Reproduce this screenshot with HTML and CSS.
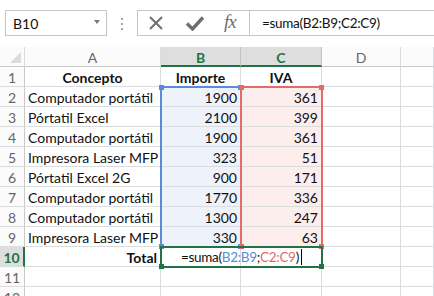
FILE: index.html
```html
<!DOCTYPE html>
<html>
	<head>
		<meta http-equiv="Content-Type" content="text/html; charset=utf-8">
		<title>suma</title>
		<link rel="stylesheet" href="styles.css">
	</head>
	<body>
		<div class="topbar">
			<div class="namebox">
				<span>B10</span>
				<span class="caret"></span>
			</div>
			<div class="grip"><i></i><i></i><i></i></div>
			<div class="fbar">
				<div class="fbtns">
					<svg class="ico-x" width="16" height="16" viewBox="0 0 16 16">
						<path d="M2 2 L14 14 M14 2 L2 14" stroke="#6f6f6f" stroke-width="2" fill="none"/>
					</svg>
					<svg class="ico-ok" width="20" height="16" viewBox="0 0 20 16">
						<path d="M2 8.5 L7.5 14 L18 2.5" stroke="#6f6f6f" stroke-width="3.4" fill="none"/>
					</svg>
					<span class="fx">fx</span>
				</div>
				<div class="finput">=suma(B2:B9;C2:C9)</div>
			</div>
		</div>

		<div class="sheet">
			<!-- headers -->
			<div class="c hd corner"><span class="tri"></span></div>
			<div class="c hd">A</div>
			<div class="c hd sel">B</div>
			<div class="c hd sel">C</div>
			<div class="c hd">D</div>
			<div class="c hd"></div>

			<div class="c rh">1</div>
			<div class="c b ctr">Concepto</div>
			<div class="c b ctr">Importe</div>
			<div class="c b ctr">IVA</div>
			<div class="c"></div><div class="c"></div>

			<div class="c rh">2</div>
			<div class="c">Computador portátil</div>
			<div class="c num blu">1900</div>
			<div class="c num red">361</div>
			<div class="c"></div><div class="c"></div>

			<div class="c rh">3</div>
			<div class="c">Pórtatil Excel</div>
			<div class="c num blu">2100</div>
			<div class="c num red">399</div>
			<div class="c"></div><div class="c"></div>

			<div class="c rh">4</div>
			<div class="c">Computador portátil</div>
			<div class="c num blu">1900</div>
			<div class="c num red">361</div>
			<div class="c"></div><div class="c"></div>

			<div class="c rh">5</div>
			<div class="c">Impresora Laser MFP</div>
			<div class="c num blu">323</div>
			<div class="c num red">51</div>
			<div class="c"></div><div class="c"></div>

			<div class="c rh">6</div>
			<div class="c">Pórtatil Excel 2G</div>
			<div class="c num blu">900</div>
			<div class="c num red">171</div>
			<div class="c"></div><div class="c"></div>

			<div class="c rh">7</div>
			<div class="c">Computador portátil</div>
			<div class="c num blu">1770</div>
			<div class="c num red">336</div>
			<div class="c"></div><div class="c"></div>

			<div class="c rh">8</div>
			<div class="c">Computador portátil</div>
			<div class="c num blu">1300</div>
			<div class="c num red">247</div>
			<div class="c"></div><div class="c"></div>

			<div class="c rh">9</div>
			<div class="c">Impresora Laser MFP</div>
			<div class="c num blu">330</div>
			<div class="c num red">63</div>
			<div class="c"></div><div class="c"></div>

			<div class="c rh rsel">10</div>
			<div class="c b num">Total</div>
			<div class="c edit">=suma(<span class="rb">B2:B9</span>;<span class="rr">C2:C9</span>)<span class="cursor"></span></div>
			<div class="c"></div>
			<div class="c"></div><div class="c"></div>

			<div class="c rh">11</div>
			<div class="c"></div><div class="c"></div><div class="c"></div><div class="c"></div><div class="c"></div>

			<div class="c rh">12</div>
			<div class="c"></div><div class="c"></div><div class="c"></div><div class="c"></div><div class="c"></div>

			<!-- range outlines drawn over the grid -->
			<div class="range rng-b">
				<span class="knob tl"></span><span class="knob tr"></span>
				<span class="knob bl"></span><span class="knob br"></span>
			</div>
			<div class="range rng-r">
				<span class="knob tl"></span><span class="knob tr"></span>
				<span class="knob bl"></span><span class="knob br"></span>
			</div>
			<div class="range rng-g">
				<span class="knob bl"></span><span class="knob br"></span>
			</div>
		</div>
	</body>
</html>
```

FILE: styles.css
```css
body {
	margin: 0;
	padding: 0;
	overflow: hidden;
	background: #fff;
	font-family: Lato, "Liberation Sans", sans-serif;
	font-size: 14px;
	color: #111;
}

/* formula bar */
.topbar {
	height: 47px;
	box-sizing: border-box;
	padding: 10px 0 0 5px;
	display: flex;
	align-items: flex-start;
}

.namebox {
	width: 102px;
	height: 26px;
	box-sizing: border-box;
	border: 1px solid #c6c6c6;
	display: flex;
	align-items: center;
	justify-content: space-between;
	padding: 0 6px 0 7px;
}

.caret {
	width: 0;
	height: 0;
	border-top: 4px solid #7a7a7a;
	border-left: 3.5px solid transparent;
	border-right: 3.5px solid transparent;
	margin-top: -2px;
}

.grip {
	width: 3px;
	margin: 8px 0 0 14px;
	display: flex;
	flex-direction: column;
	gap: 3px;
}

.grip i {
	width: 2px;
	height: 2px;
	background: #a8a8a8;
}

.fbar {
	margin-left: 13px;
	flex: 1;
	height: 26px;
	box-sizing: border-box;
	border: 1px solid #c6c6c6;
	border-right: none;
	display: flex;
}

.fbtns {
	width: 111px;
	display: flex;
	align-items: center;
	padding-left: 10px;
	box-sizing: border-box;
}

.ico-x {
	margin-right: 21px;
}

.ico-ok {
	margin-right: 19px;
}

.fx {
	font-family: "Liberation Serif", serif;
	font-style: italic;
	font-size: 19px;
	color: #6f6f6f;
	letter-spacing: -1px;
	margin-top: -2px;
}

.finput {
	flex: 1;
	border-left: 1px solid #c6c6c6;
	padding-left: 12px;
	line-height: 24px;
	font-size: 13.5px;
	letter-spacing: -0.3px;
}

/* sheet */
.sheet {
	position: relative;
	display: grid;
	grid-template-columns: 25px 136px 80px 81px 79px 1fr;
	grid-auto-rows: 20px;
}

.c {
	box-sizing: border-box;
	border-right: 1px solid #dadcdd;
	border-bottom: 1px solid #dadcdd;
	padding: 0 3px;
	line-height: 21px;
	white-space: nowrap;
}

.hd {
	background: #fbfbfb;
	color: #666;
	text-align: center;
	border-bottom-color: #c9c9c9;
}

.hd.sel {
	background: #dedede;
	color: #217346;
	font-weight: bold;
	border-bottom: 2px solid #217346;
	border-right-color: #c2c2c2;
}

.corner {
	position: relative;
}

.tri {
	position: absolute;
	right: 3px;
	bottom: 3px;
	width: 0;
	height: 0;
	border-left: 11px solid transparent;
	border-bottom: 11px solid #dcdcdc;
}

.rh {
	background: #fbfbfb;
	color: #666;
	text-align: center;
	padding: 0;
	border-right-color: #c9c9c9;
}

.rh.rsel {
	background: #dedede;
	color: #217346;
	font-weight: bold;
	border-right: 2px solid #217346;
}

.b {
	font-weight: bold;
}

.ctr {
	text-align: center;
}

.num {
	text-align: right;
}

.blu {
	background: #eef3fb;
}

.red {
	background: #fdeeee;
}

.edit {
	padding-left: 20px;
	overflow: visible;
	position: relative;
	z-index: 1;
	font-size: 13.5px;
	letter-spacing: -0.3px;
}

.rb {
	color: #5b8bd6;
}

.rr {
	color: #e06c6c;
}

.cursor {
	display: inline-block;
	width: 1px;
	height: 16px;
	background: #000;
	margin-left: 2px;
	vertical-align: -3px;
}

/* range highlight outlines */
.range {
	position: absolute;
	box-sizing: border-box;
	border: 2px solid;
	z-index: 2;
}

.rng-b {
	left: 160px;
	top: 39px;
	width: 82px;
	height: 162px;
	border-color: #5b8bd6;
}

.rng-r {
	left: 240px;
	top: 39px;
	width: 83px;
	height: 162px;
	border-color: #e06c6c;
}

.rng-g {
	left: 160px;
	top: 199px;
	width: 163px;
	height: 22px;
	border-color: #217346;
}

.knob {
	position: absolute;
	width: 5px;
	height: 5px;
}

.rng-b .knob { background: #5b8bd6; }
.rng-r .knob { background: #e06c6c; }
.rng-g .knob { background: #217346; }

.knob.tl { left: -3px; top: -3px; }
.knob.tr { right: -3px; top: -3px; }
.knob.bl { left: -3px; bottom: -3px; }
.knob.br { right: -3px; bottom: -3px; }
```
